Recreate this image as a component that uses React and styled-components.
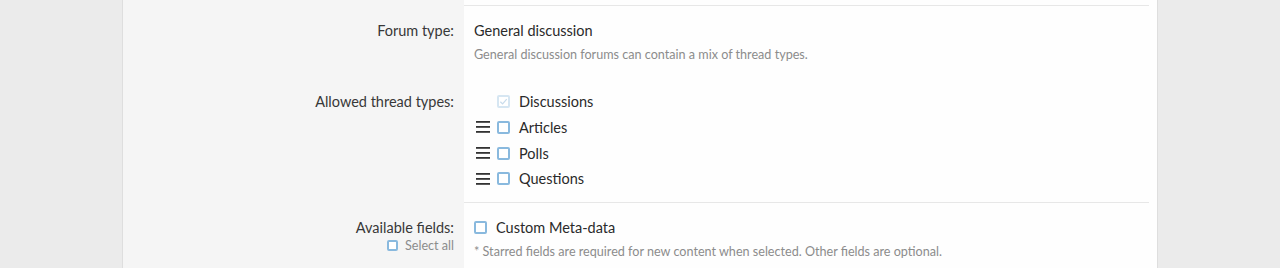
import React from 'react'
import styled, { createGlobalStyle } from 'styled-components'

const Global = createGlobalStyle`
  body {
    margin: 0;
    background: #ebebeb;
    font-family: Lato, "Open Sans", sans-serif;
    color: #2f2f2f;
  }
`

const Page = styled.div`
  height: 268px;
  overflow: hidden;
`

const Block = styled.div`
  width: 1034px;
  margin: 0 auto;
  border-left: 1px solid #dedede;
  border-right: 1px solid #dedede;
  background: #fefefe;
`

const Row = styled.dl`
  display: grid;
  grid-template-columns: 341px 1fr;
  margin: 0;
`

const Label = styled.dt`
  background: #f5f5f5;
  text-align: right;
  padding: ${p => p.$top ?? 15}px 10px 0 0;
  font-size: 14.5px;
  line-height: 20px;
  color: #383838;
`

const Cell = styled.dd`
  margin: 0;
  padding-right: 8px;
`

const Inner = styled.div`
  border-top: ${p => (p.$line ? '1px solid #e7e7e7' : 'none')};
  padding: ${p => p.$pad || '15px 0 13px 10px'};
  height: ${p => (p.$h ? `${p.$h}px` : 'auto')};
  box-sizing: border-box;
`

const Value = styled.div`
  font-size: 14.5px;
  line-height: 20px;
  color: #2a2a2a;
`

const Hint = styled.div`
  margin-top: 5px;
  font-size: 12.6px;
  line-height: 18px;
  color: #8c8c8c;
`

const List = styled.ul`
  list-style: none;
  margin: 0;
  padding: 0;
`

const Item = styled.li`
  display: flex;
  align-items: center;
  height: 25.67px;
  font-size: 14.5px;
  color: #2a2a2a;
`

const Handle = styled.span`
  width: 14px;
  height: 12px;
  margin-right: 7px;
  display: inline-flex;
  visibility: ${p => (p.$hidden ? 'hidden' : 'visible')};
`

const Box = styled.span`
  width: ${p => p.$size || 13}px;
  height: ${p => p.$size || 13}px;
  box-sizing: border-box;
  border: 2px solid ${p => (p.$disabled ? '#d6e6f2' : '#89b9de')};
  border-radius: 2px;
  background: #fff;
  margin-right: ${p => p.$gap || 9}px;
  display: inline-flex;
  align-items: center;
  justify-content: center;
  flex-shrink: 0;
`

const SelectAll = styled.div`
  display: flex;
  justify-content: flex-end;
  align-items: center;
  font-size: 12.6px;
  line-height: 15px;
  color: #8c8c8c;
`

const Check = styled.label`
  display: flex;
  align-items: center;
  font-size: 14.5px;
  line-height: 20px;
  color: #2a2a2a;
`

function Grip() {
  return (
    <svg width="14" height="12" viewBox="0 0 14 12">
      <rect x="0" y="0" width="14" height="1.8" fill="#333" />
      <rect x="0" y="5" width="14" height="1.8" fill="#333" />
      <rect x="0" y="10" width="14" height="1.8" fill="#333" />
    </svg>
  )
}

const types = ['Articles', 'Polls', 'Questions']

export default function App() {
  return (
    <Page>
      <Global />
      <Block>
        <Row>
          <Label $top={0} />
          <Cell>
            <Inner $pad="0" $h={5} />
          </Cell>
        </Row>
        <Row>
          <Label $top={16}>Forum type:</Label>
          <Cell>
            <Inner $line>
              <Value>General discussion</Value>
              <Hint>General discussion forums can contain a mix of thread types.</Hint>
            </Inner>
          </Cell>
        </Row>
        <Row>
          <Label>Allowed thread types:</Label>
          <Cell>
            <Inner $pad="12px 0 10px 12px">
              <List>
                <Item>
                  <Handle $hidden />
                  <Box $disabled>
                    <svg width="9" height="9" viewBox="0 0 10 10">
                      <path d="M1.5 5.2 L4 7.6 L8.6 2.4" fill="none" stroke="#c9dcec" strokeWidth="1.4" />
                    </svg>
                  </Box>
                  Discussions
                </Item>
                {types.map(t => (
                  <Item key={t}>
                    <Handle><Grip /></Handle>
                    <Box />
                    {t}
                  </Item>
                ))}
              </List>
            </Inner>
          </Cell>
        </Row>
        <Row>
          <Label $top={16}>
            Available fields:
            <SelectAll>
              <Box $size={11} $gap={7} />
              Select all
            </SelectAll>
          </Label>
          <Cell>
            <Inner $line>
              <Check>
                <Box $size={13} />
                Custom Meta-data
              </Check>
              <Hint>* Starred fields are required for new content when selected. Other fields are optional.</Hint>
            </Inner>
          </Cell>
        </Row>
      </Block>
    </Page>
  )
}
